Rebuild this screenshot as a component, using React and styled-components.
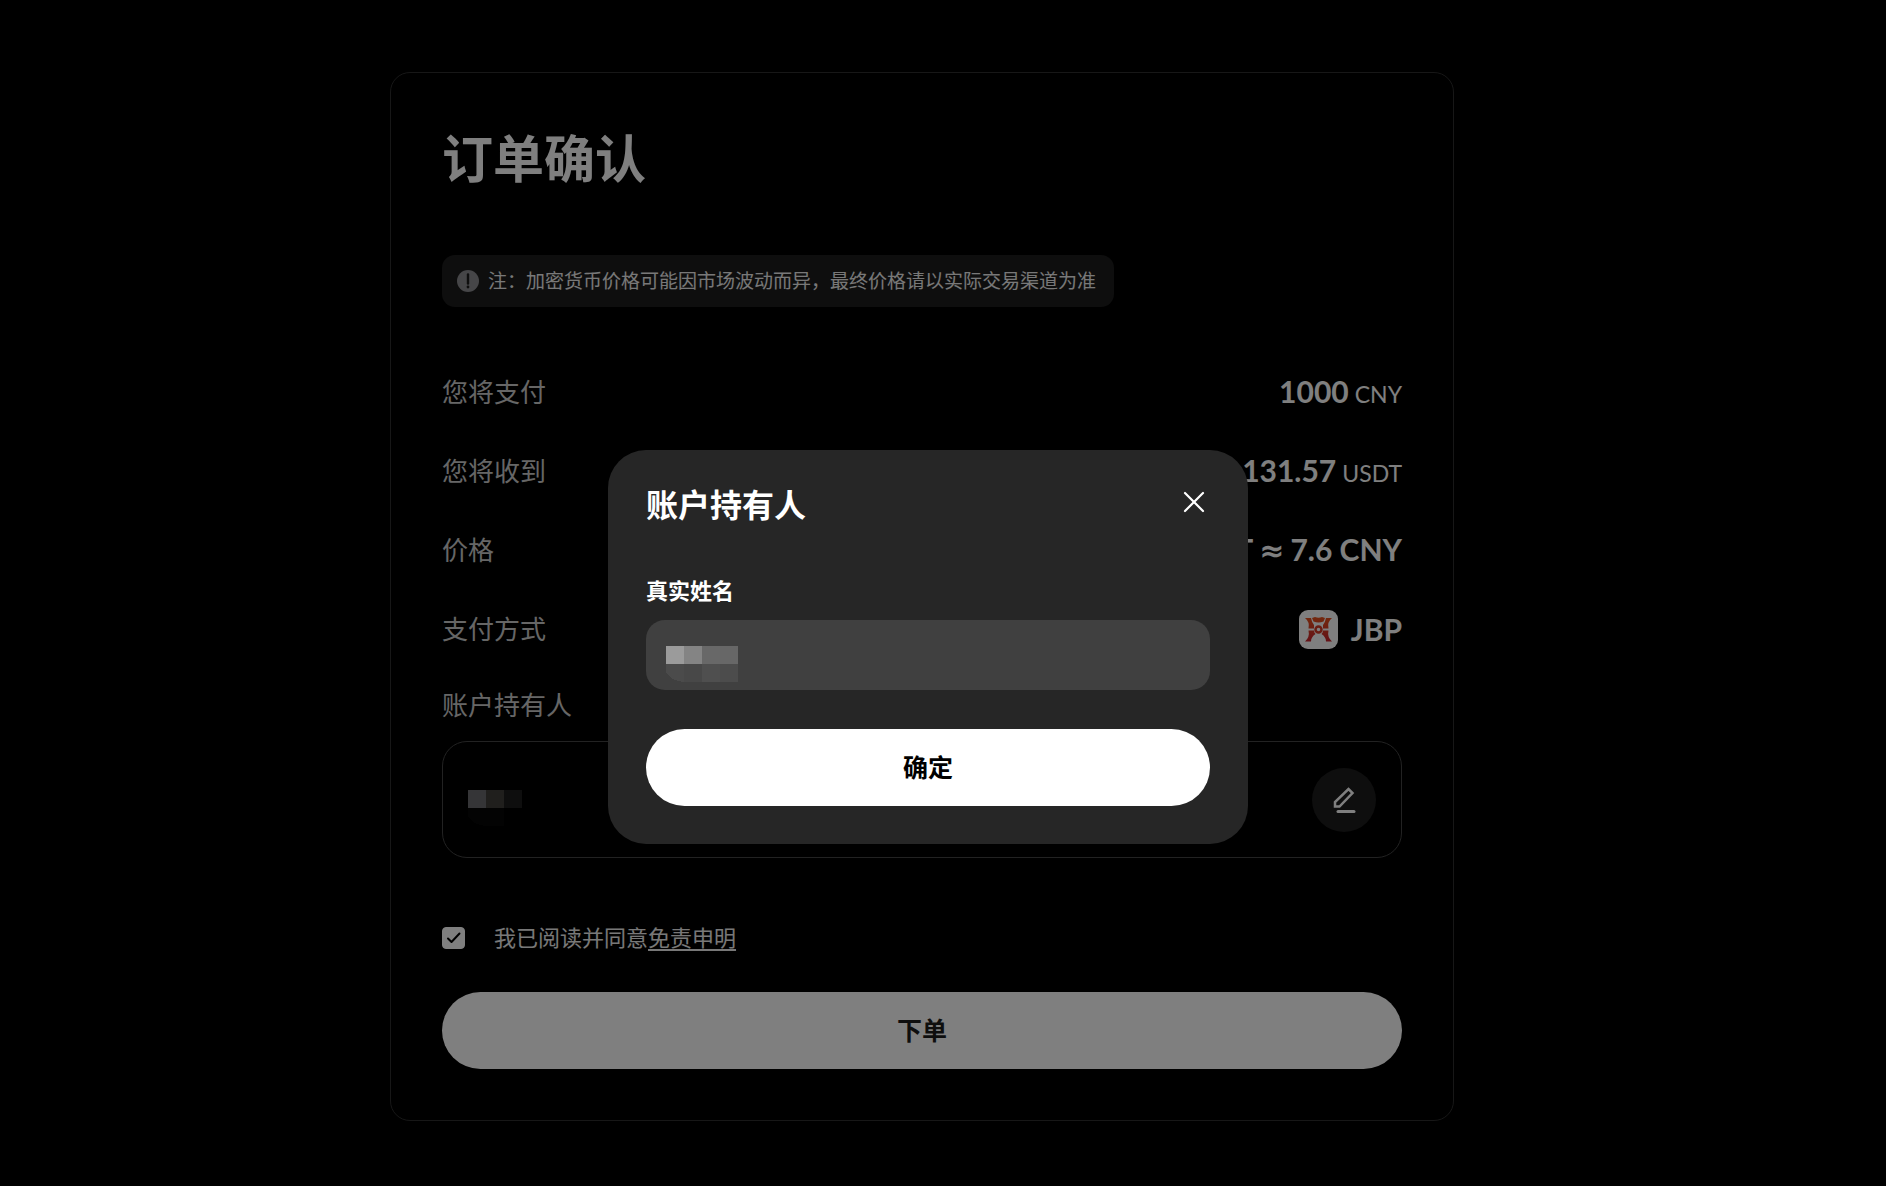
import { useState } from "react";
import styled, { createGlobalStyle } from "styled-components";

const GlobalStyle = createGlobalStyle`
  * {
    box-sizing: border-box;
  }

  body {
    margin: 0;
    background: #000;
    color: #fff;
    font-family: Lato, "Noto Sans CJK SC", sans-serif;
  }

  button,
  input {
    font-family: inherit;
  }
`;

const Page = styled.main`
  min-height: 100vh;
  padding: 72px 42px 64px 0;
`;

const Card = styled.section`
  max-width: 1064px;
  margin: 0 auto;
  padding: 51px;
  border: 1px solid #2e2e2e;
  border-radius: 20px;
`;

const Title = styled.h1`
  margin: 0 0 61px;
  font-size: 51px;
  line-height: 70px;
  font-weight: 700;
`;

const Notice = styled.div`
  display: flex;
  align-items: center;
  gap: 9px;
  width: fit-content;
  height: 52px;
  padding: 0 18px 0 15px;
  border-radius: 13px;
  background: #1c1c1c;
  color: #f0f0f0;
  font-size: 19px;
  line-height: 28px;
`;

const Rows = styled.dl`
  display: flex;
  flex-direction: column;
  gap: 39px;
  margin: 65px 0 36px;
`;

const Row = styled.div`
  display: flex;
  align-items: center;
  justify-content: space-between;
  height: 40px;
`;

const Label = styled.dt`
  color: #ccc;
  font-size: 26px;
  line-height: 40px;
`;

const Value = styled.dd`
  display: flex;
  align-items: ${(props) => (props.$icon ? "center" : "baseline")};
  gap: ${(props) => (props.$icon ? "13px" : "6px")};
  margin: 0;
  font-size: 30px;
  line-height: 40px;
  font-weight: 700;
`;

const Unit = styled.span`
  font-size: 23px;
  font-weight: 400;
`;

const Approx = styled.span`
  font-family: "DejaVu Sans", sans-serif;
`;

const HolderTitle = styled.h2`
  margin: 0 0 16px;
  color: #ccc;
  font-size: 26px;
  line-height: 40px;
  font-weight: 400;
`;

const Holder = styled.div`
  display: flex;
  align-items: center;
  justify-content: space-between;
  height: 117px;
  padding: 0 25px;
  border: 1px solid #444;
  border-radius: 25px;
`;

const HolderName = styled.div`
  display: flex;
  padding-top: 16px;
`;

const EditButton = styled.button`
  display: flex;
  align-items: center;
  justify-content: center;
  width: 64px;
  height: 64px;
  padding: 0;
  border: 0;
  border-radius: 50%;
  background: #1c1c1c;
  color: #fff;
  cursor: pointer;
`;

const Agreement = styled.div`
  display: flex;
  align-items: center;
  gap: 29px;
  margin: 62px 0 36px;
  font-size: 22px;
  line-height: 36px;
  color: #f0f0f0;

  a {
    color: inherit;
    text-underline-offset: 3px;
    text-decoration-thickness: 2px;
  }
`;

const CheckBox = styled.span`
  display: grid;
  width: 23px;
  height: 22px;

  input,
  svg {
    grid-area: 1 / 1;
  }

  input {
    appearance: none;
    width: 23px;
    height: 22px;
    margin: 0;
    border: 1px solid #fff;
    border-radius: 4px;
  }

  input:checked {
    background: #fff;
  }

  svg {
    pointer-events: none;
  }
`;

const PillButton = styled.button`
  display: block;
  width: 100%;
  height: 77px;
  padding: 0 0 2px;
  border: 0;
  border-radius: 39px;
  background: #fff;
  color: ${(props) => props.$color || "#000"};
  font-size: 25px;
  line-height: 38px;
  font-weight: 700;
  cursor: pointer;
`;

const Overlay = styled.div`
  position: fixed;
  inset: 0;
  display: flex;
  align-items: center;
  justify-content: center;
  padding: 108px 30px 0 0;
  background: rgba(0, 0, 0, 0.5);
`;

const Dialog = styled.form`
  width: 640px;
  padding: 32px 38px 38px;
  border-radius: 38px;
  background: #262626;
`;

const DialogHead = styled.div`
  display: flex;
  align-items: flex-start;
  justify-content: space-between;
  margin-bottom: 44px;

  h2 {
    margin: 0;
    font-size: 32px;
    line-height: 46px;
    font-weight: 700;
  }
`;

const CloseButton = styled.button`
  display: flex;
  align-items: center;
  justify-content: center;
  width: 32px;
  height: 40px;
  padding: 0;
  border: 0;
  background: none;
  color: #fff;
  cursor: pointer;
`;

const FieldLabel = styled.label`
  display: block;
  margin-bottom: 10px;
  font-size: 22px;
  line-height: 38px;
  font-weight: 600;
`;

const Field = styled.div`
  display: flex;
  align-items: center;
  height: 70px;
  margin-bottom: 39px;
  padding: 18px 20px 0;
  border-radius: 19px;
  background: #404040;

  input {
    flex: 1;
    min-width: 0;
    height: 36px;
    padding: 0;
    border: 0;
    outline: 0;
    background: none;
    color: #fff;
    font-size: 22px;
  }
`;

const dialogMask = [
  ["#9b9b9b", "#848484", "#686868", "#676767"],
  ["#4b4b4b", "#484848", "#4f4f4f", "#4c4c4c"],
];

const holderMask = [
  ["#6a6a6e", "#403e3b", "#1c1c1c"],
  ["#060606", "#060606", "#000"],
];

function MaskedName({ cells }) {
  return (
    <svg width={cells[0].length * 18} height="36" shapeRendering="crispEdges" aria-hidden="true">
      {cells.map((row, y) =>
        row.map((fill, x) =>
          y === 1 && x === 0 ? (
            <path key={x} d="M0 18h18v18Q5 35 0 26z" fill={fill} />
          ) : (
            <rect key={x} x={x * 18} y={y * 18} width="18" height="18" fill={fill} />
          )
        )
      )}
    </svg>
  );
}

function NoticeIcon() {
  return (
    <svg width="22" height="22" viewBox="0 0 22 22">
      <circle cx="11" cy="11" r="11" fill="#8c8c90" />
      <path d="M11 4.500v9" stroke="#1c1c1c" strokeWidth="2.400" strokeLinecap="round" />
      <circle cx="11" cy="17" r="1.400" fill="#1c1c1c" />
    </svg>
  );
}

function PayLogo() {
  return (
    <svg width="39" height="39" viewBox="0 0 39 39">
      <defs>
        <linearGradient id="pay" gradientUnits="userSpaceOnUse" x1="0" y1="7" x2="0" y2="32">
          <stop offset="0" stopColor="#e8521c" />
          <stop offset="1" stopColor="#c8222e" />
        </linearGradient>
      </defs>
      <rect width="39" height="39" rx="9" fill="#fff" />
      <g fill="url(#pay)">
        <path d="M6 8h6q1 5 3 7v3.500H9.500Q11 12 6 8z" />
        <path d="M33 8h-6q-1 5-3 7v3.500h5.500Q28 12 33 8z" />
        <path d="M13 8l3-1q3.500 1.500 7 0l3 1-1.500 3.500q-5 2-10 0z" />
        <path d="M9.500 20.500H15q0 2 1.500 3.500Q12 27 12 31.500H6Q11 27 9.500 20.500z" />
        <path d="M29.500 20.500H24q0 2-1.500 3.500Q27 27 27 31.500h6q-5-4.500-3.500-11z" />
      </g>
      <circle cx="19.500" cy="19.500" r="3" fill="#fff" stroke="#d43a26" strokeWidth="2.500" />
    </svg>
  );
}

function EditIcon() {
  return (
    <svg width="24" height="28" viewBox="0 0 24 28" fill="none" stroke="currentColor" strokeWidth="2.500">
      <path d="M3 20.500v-4.500L16.500 3l4 4L7.500 20.500z" />
      <path d="M6 25.500h16" strokeWidth="3" strokeLinecap="round" />
    </svg>
  );
}

function App() {
  const [open, setOpen] = useState(true);
  const [agreed, setAgreed] = useState(true);
  const [name, setName] = useState("");

  const submit = (e) => {
    e.preventDefault();
    setOpen(false);
  };

  return (
    <>
      <GlobalStyle />
      <Page>
        <Card>
          <Title>订单确认</Title>
          <Notice>
            <NoticeIcon />
            <span>注：加密货币价格可能因市场波动而异，最终价格请以实际交易渠道为准</span>
          </Notice>
          <Rows>
            <Row>
              <Label>您将支付</Label>
              <Value>1000 <Unit>CNY</Unit></Value>
            </Row>
            <Row>
              <Label>您将收到</Label>
              <Value>131.57 <Unit>USDT</Unit></Value>
            </Row>
            <Row>
              <Label>价格</Label>
              <Value>1 USDT <Approx>≈</Approx> 7.6 CNY</Value>
            </Row>
            <Row>
              <Label>支付方式</Label>
              <Value $icon><PayLogo />JBP</Value>
            </Row>
          </Rows>
          <HolderTitle>账户持有人</HolderTitle>
          <Holder>
            <HolderName>
              <MaskedName cells={holderMask} />
            </HolderName>
            <EditButton type="button" aria-label="编辑" onClick={() => setOpen(true)}>
              <EditIcon />
            </EditButton>
          </Holder>
          <Agreement>
            <CheckBox>
              <input id="agree" type="checkbox" checked={agreed} onChange={() => setAgreed(!agreed)} />
              <svg width="23" height="22" viewBox="0 0 23 22" fill="none">
                <path d="M6 11.500l3.500 3.500 8-8.500" stroke="#000" strokeWidth="2" strokeLinecap="round" strokeLinejoin="round" />
              </svg>
            </CheckBox>
            <span>
              <label htmlFor="agree">我已阅读并同意</label>
              <a href="#disclaimer">免责申明</a>
            </span>
          </Agreement>
          <PillButton type="button" $color="#1c1c1c">下单</PillButton>
        </Card>
      </Page>
      {open && (
        <Overlay>
          <Dialog role="dialog" aria-labelledby="dialog-title" onSubmit={submit}>
            <DialogHead>
              <h2 id="dialog-title">账户持有人</h2>
              <CloseButton type="button" aria-label="关闭" onClick={() => setOpen(false)}>
                <svg width="22" height="22" viewBox="0 0 22 22" stroke="currentColor" strokeWidth="2.200" strokeLinecap="round">
                  <path d="M2 2l18 18M20 2L2 20" />
                </svg>
              </CloseButton>
            </DialogHead>
            <FieldLabel htmlFor="real-name">真实姓名</FieldLabel>
            <Field>
              <MaskedName cells={dialogMask} />
              <input id="real-name" value={name} onChange={(e) => setName(e.target.value)} />
            </Field>
            <PillButton type="submit">确定</PillButton>
          </Dialog>
        </Overlay>
      )}
    </>
  );
}

export default App;
